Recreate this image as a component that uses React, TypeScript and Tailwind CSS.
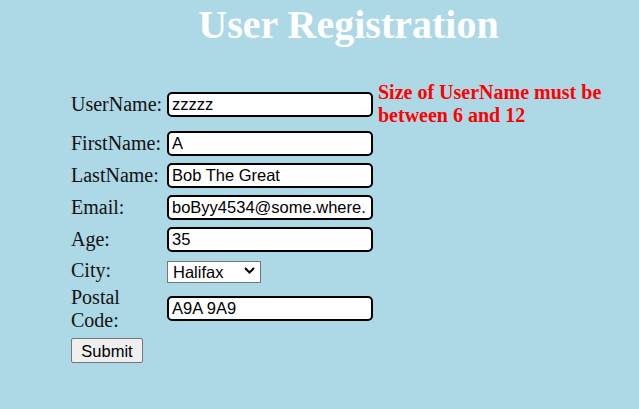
export default function App() {
  const serif = { fontFamily: '"Liberation Serif", "Times New Roman", serif' };
  const sans = { fontFamily: '"Liberation Sans", Arial, sans-serif' };
  const inputCls =
    'w-[206px] h-[25px] border-2 border-black rounded-[5px] bg-white px-[3px] text-[16.5px] text-black outline-none';

  return (
    <div className="min-h-[409px] w-full bg-[#add8e6]" style={serif}>
      <h1 className="pl-[58px] pt-[3px] text-center text-[40px] font-bold leading-[44px] text-white">
        User Registration
      </h1>

      <form className="mt-[34px] pl-[71px]">
        <div className="grid grid-cols-[96px_211px_1fr] text-[20px] leading-[23px] text-[#111]">
          {/* UserName */}
          <div className="flex h-[46px] items-center">UserName:</div>
          <div className="flex h-[46px] items-center">
            <input className={inputCls} style={sans} defaultValue="zzzzz" />
          </div>
          <div className="flex h-[46px] w-[250px] items-center font-bold text-[#ff0000]">
            Size of UserName must be between 6 and 12
          </div>

          {/* FirstName */}
          <div className="flex h-[32px] items-center">FirstName:</div>
          <div className="flex h-[32px] items-center">
            <input className={inputCls} style={sans} defaultValue="A" />
          </div>
          <div />

          {/* LastName */}
          <div className="flex h-[32px] items-center">LastName:</div>
          <div className="flex h-[32px] items-center">
            <input className={inputCls} style={sans} defaultValue="Bob The Great" />
          </div>
          <div />

          {/* Email */}
          <div className="flex h-[32px] items-center">Email:</div>
          <div className="flex h-[32px] items-center">
            <input className={inputCls} style={sans} defaultValue="boByy4534@some.where." />
          </div>
          <div />

          {/* Age */}
          <div className="flex h-[32px] items-center">Age:</div>
          <div className="flex h-[32px] items-center">
            <input className={inputCls} style={sans} defaultValue="35" />
          </div>
          <div />

          {/* City */}
          <div className="flex h-[31px] items-center">City:</div>
          <div className="flex h-[31px] items-center">
            <div className="relative h-[22px] w-[94px]">
              <select
                className="h-[22px] w-[94px] appearance-none border border-[#767676] bg-white pl-[5px] text-[16.5px] leading-[20px] text-black outline-none"
                style={sans}
                defaultValue="Halifax"
              >
                <option>Halifax</option>
                <option>Toronto</option>
                <option>Vancouver</option>
              </select>
              <svg
                className="pointer-events-none absolute right-[6px] top-[7px]"
                width="11"
                height="7"
                viewBox="0 0 11 7"
              >
                <path d="M1 1l4.5 4.5L10 1" fill="none" stroke="#000" strokeWidth="2" />
              </svg>
            </div>
          </div>
          <div />

          {/* Postal Code */}
          <div className="flex h-[45px] items-center">Postal Code:</div>
          <div className="flex h-[45px] items-center">
            <input className={inputCls} style={sans} defaultValue="A9A 9A9" />
          </div>
          <div />
        </div>

        <button
          type="button"
          className="mt-[7px] h-[25px] w-[72px] rounded-[2px] border border-[#767676] bg-[#efefef] text-[16.5px] text-black"
          style={sans}
        >
          Submit
        </button>
      </form>
    </div>
  );
}
